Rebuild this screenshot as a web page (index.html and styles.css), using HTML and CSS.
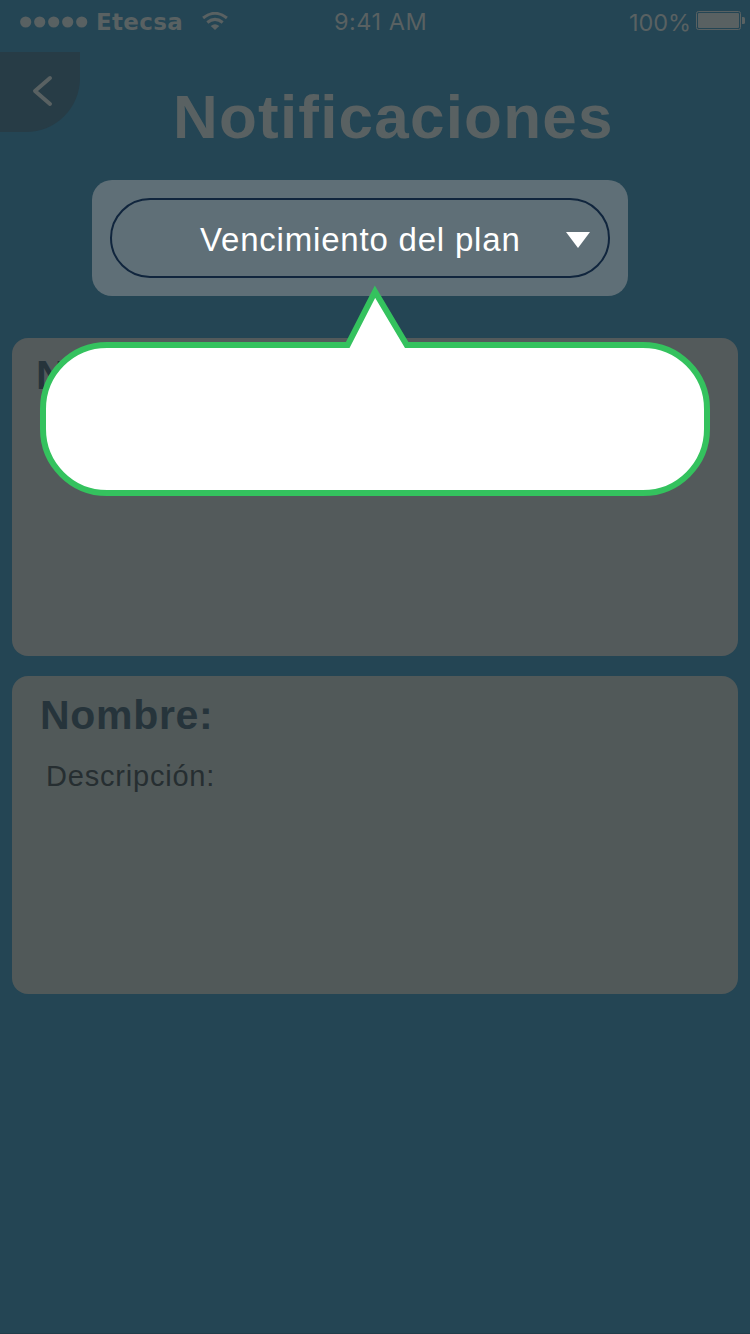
FILE: index.html
```html
<!DOCTYPE html>
<html lang="es">
<head>
<meta charset="utf-8">
<title>Notificaciones</title>
<link rel="stylesheet" href="styles.css">
</head>
<body>
<div class="screen">
  <header class="status">
    <div class="carrier">
      <svg class="signal" width="68" height="12" viewBox="0 0 68 12"><circle cx="5.7" cy="6" r="5.6"/><circle cx="19.7" cy="6" r="5.6"/><circle cx="33.7" cy="6" r="5.6"/><circle cx="47.7" cy="6" r="5.6"/><circle cx="61.7" cy="6" r="5.6"/></svg>
      <span class="operator">Etecsa</span>
      <svg class="wifi" width="26" height="18" viewBox="0 0 26 18"><path class="arc" d="M1.100 6Q13-3.400 24.900 6M5.300 10.500Q13 4.300 20.700 10.500"/><path d="M8.700 13.900Q13 10.500 17.300 13.900L13 18Z"/></svg>
    </div>
    <span class="clock">9:41 AM</span>
    <div class="power">
      <span class="percent">100%</span>
      <svg class="battery" width="50" height="20" viewBox="0 0 50 20"><rect class="shell" x=".5" y=".5" width="44" height="18" rx="2"/><rect x="2" y="2" width="41" height="15" rx="1"/><path d="M46 6h1.500q1.500 0 1.500 1.500v4q0 1.500-1.500 1.500H46z"/></svg>
    </div>
  </header>
  <div class="heading">
    <button class="back" aria-label="Volver"><svg width="22" height="32" viewBox="0 0 22 32"><path d="M18 3L3 16l15 13"/></svg></button>
    <h1 class="title">Notificaciones</h1>
  </div>
  <div class="filter">
    <div class="select"><span class="value">Vencimiento del plan</span><svg class="caret" width="24" height="16" viewBox="0 0 24 16"><path d="M0 0h24L12 16z"/></svg></div>
  </div>
  <main class="cards">
    <section class="card first"><h2 class="name">Nombre:</h2></section>
    <section class="card second"><h2 class="name">Nombre:</h2><p class="description">Descripción:</p></section>
  </main>
  <svg class="bubble" width="670" height="211" viewBox="0 0 670 211"><path d="M67 60H307.700L335 6.600L366.700 60H603A64 64 0 0 1 667 124V144A64 64 0 0 1 603 208H67A64 64 0 0 1 3 144V124A64 64 0 0 1 67 60Z"/></svg>
</div>
</body>
</html>
```
FILE: styles.css
```css
body {
  margin: 0;
  font-family: "Liberation Sans", Arial, sans-serif;
}

.screen {
  position: relative;
  box-sizing: border-box;
  width: 750px;
  height: 1334px;
  overflow: hidden;
  background: #244554;
  border-bottom: 1px solid #213d4a;
}

.status {
  display: grid;
  grid-template-columns: 334px 1fr 121px;
  height: 52px;
  color: #596162;
  fill: #596162;
  line-height: 30px;
}

.carrier {
  display: flex;
  align-items: flex-start;
  padding-left: 20px;
}

.signal {
  margin-top: 15.500px;
}

.operator {
  margin: 7px 0 0 8px;
  width: 87px;
  font: bold 23px/30px "DejaVu Sans", sans-serif;
  letter-spacing: 0.3px;
}

.wifi {
  margin: 12px 0 0 19px;
}

.arc {
  fill: none;
  stroke: #596162;
  stroke-width: 3;
}

.clock,
.percent {
  font-family: Inter, sans-serif;
  font-size: 23.500px;
  font-weight: 400;
}

.clock {
  padding-top: 7px;
  letter-spacing: 0.5px;
}

.power {
  display: flex;
}

.percent {
  width: 67px;
  padding-top: 8px;
  letter-spacing: -0.1px;
}

.battery {
  margin-top: 11px;
}

.shell {
  fill: none;
  stroke: #596162;
}

.heading {
  display: flex;
  height: 128px;
}

.back {
  display: flex;
  flex: none;
  box-sizing: border-box;
  width: 80px;
  height: 80px;
  padding: 23px 0 0 32px;
  border: 0;
  border-radius: 0 0 54px 0;
  background: #273c46;
}

.back path {
  fill: none;
  stroke: #596162;
  stroke-width: 4;
  stroke-linecap: round;
  stroke-linejoin: round;
}

.title {
  margin: 29px 0 0 93px;
  color: #596162;
  font-size: 62px;
  line-height: 72px;
  letter-spacing: 1.2px;
  font-variant-ligatures: none;
}

.filter {
  box-sizing: border-box;
  width: 536px;
  height: 116px;
  margin-left: 92px;
  padding: 18px;
  border-radius: 20px;
  background: #5f6f77;
}

.select {
  display: flex;
  align-items: center;
  box-sizing: border-box;
  height: 80px;
  padding: 0 18px 0 88px;
  border: 2px solid #10253d;
  border-radius: 40px;
  color: #fff;
}

.value {
  flex: 1;
  padding-top: 3px;
  font-size: 33px;
  line-height: 40px;
  letter-spacing: 0.8px;
  white-space: nowrap;
}

.caret {
  margin-top: 3px;
  fill: #fff;
}

.cards {
  display: flex;
  flex-direction: column;
  gap: 20px;
  padding: 42px 12px 0;
}

.card {
  box-sizing: border-box;
  height: 318px;
  border-radius: 16px;
}

.first {
  padding: 13px 24px;
  background: #535a5b;
}

.second {
  padding: 15px 28px;
  background: #515959;
}

.name {
  margin: 0;
  color: #26343b;
  font-size: 41px;
  line-height: 48px;
  letter-spacing: 0.7px;
}

.description {
  margin: 20px 0 0 6px;
  color: #262e31;
  font-size: 29px;
  line-height: 34px;
  letter-spacing: 0.8px;
}

/* The callout floats over the filter and the first card. */
.bubble {
  position: absolute;
  left: 40px;
  top: 285px;
  fill: #fff;
  stroke: #34c25e;
  stroke-width: 6;
  stroke-miterlimit: 10;
}
```
